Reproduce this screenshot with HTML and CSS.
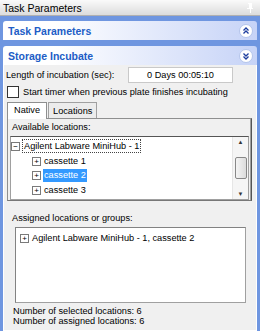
FILE: index.html
```html
<!DOCTYPE html>
<html lang="en">
<head>
  <meta charset="UTF-8">
  <title>Task Parameters</title>
  <link rel="stylesheet" href="styles.css">
</head>
<body>

  <div class="titlebar">
    <span>Task Parameters</span>
    <svg class="pin" width="8" height="10" viewBox="0 0 8 10">
      <rect x="2" y="0" width="4" height="1" fill="#fff"/>
      <rect x="3" y="1" width="3" height="4" fill="#fff"/>
      <rect x="1" y="5" width="6" height="1" fill="#fff"/>
      <rect x="4" y="6" width="1" height="4" fill="#fff"/>
    </svg>
  </div>

  <div class="pane">
    <div class="group-head first">
      <span>Task Parameters</span>
      <svg class="chev" width="14" height="14" viewBox="0 0 14 14">
        <circle cx="7" cy="7" r="6.5" fill="#fff" stroke="#b3c4ea"/>
        <path d="M4.5 6.5 L7 4 L9.5 6.5 M4.5 9.5 L7 7 L9.5 9.5" fill="none" stroke="#1c3d9e" stroke-width="1.3"/>
      </svg>
    </div>

    <div class="group-head">
      <span>Storage Incubate</span>
      <svg class="chev" width="14" height="14" viewBox="0 0 14 14">
        <circle cx="7" cy="7" r="6.5" fill="#fff" stroke="#b3c4ea"/>
        <path d="M4.5 4.5 L7 7 L9.5 4.5 M4.5 7.5 L7 10 L9.5 7.5" fill="none" stroke="#1c3d9e" stroke-width="1.3"/>
      </svg>
    </div>

    <div class="group-body">
      <div class="row">
        <label>Length of incubation (sec):</label>
        <div class="textbox">0 Days 00:05:10</div>
      </div>
      <div class="row check-row">
        <span class="checkbox"></span>
        <label>Start timer when previous plate finishes incubating</label>
      </div>

      <div class="tabs">
        <span class="tab active">Native</span>
        <span class="tab">Locations</span>
      </div>
      <div class="tab-page">
        <div class="caption">Available locations:</div>
        <div class="tree">
          <div class="tree-items">
            <div class="node root"><span class="box">−</span><span class="focus">Agilent Labware MiniHub - 1</span></div>
            <div class="node child"><span class="box">+</span><span class="txt">cassette 1</span></div>
            <div class="node child"><span class="box">+</span><span class="txt sel">cassette 2</span></div>
            <div class="node child"><span class="box">+</span><span class="txt">cassette 3</span></div>
            <div class="node child"><span class="box">+</span><span class="txt">cassette 4</span></div>
          </div>
          <div class="scrollbar">
            <span class="arrow">▲</span>
            <span class="thumb"></span>
            <span class="arrow down">▼</span>
          </div>
        </div>
      </div>

      <div class="caption assigned">Assigned locations or groups:</div>
      <div class="list">
        <div class="node"><span class="box">+</span><span class="txt">Agilent Labware MiniHub - 1, cassette 2</span></div>
      </div>

      <div class="counts">
        <div>Number of selected locations: 6</div>
        <div>Number of assigned locations: 6</div>
      </div>
    </div>
  </div>

</body>
</html>
```

FILE: styles.css
```css
html, body {
  margin: 0;
  padding: 0;
  height: 100%;
  overflow: hidden;
  font-family: "Liberation Sans", Arial, sans-serif;
  font-size: 9.2px;
  color: #000;
  background: #6f96e0;
}

.titlebar {
  height: 15px;
  display: flex;
  align-items: center;
  justify-content: space-between;
  padding: 0 6px 0 3px;
  background: linear-gradient(#fafafa, #dcdcdc);
  border-bottom: 1px solid #b0b0b0;
  font-size: 10.5px;
}

.pin {
  margin-top: 1px;
}

.pane {
  padding: 5px 3px 5px 3px;
  height: 310px;
  display: flex;
  flex-direction: column;
}

.group-head {
  height: 19px;
  display: flex;
  align-items: center;
  justify-content: space-between;
  padding: 0 4px 0 5px;
  border-radius: 3px 3px 0 0;
  background: linear-gradient(to right, #fff 0%, #fff 20%, #c6d3f7 100%);
  color: #215dc6;
  font-weight: bold;
  font-size: 10.5px;
  margin-top: 6px;
}

.group-head.first {
  margin-top: 0;
}

.group-body {
  flex: 1;
  background: #f0f0f0;
  border: 1px solid #fff;
  border-top: none;
  padding: 2px 4px 0 2px;
  display: flex;
  flex-direction: column;
}

.row {
  display: flex;
  align-items: center;
}

.row label {
  width: 120px;
}

.textbox {
  width: 103px;
  height: 14px;
  line-height: 14px;
  background: #fff;
  border: 1px solid #c9c9c9;
  text-align: center;
  margin-left: 2px;
}

.check-row {
  margin-top: 3px;
}

.check-row label {
  width: auto;
  margin-left: 4px;
}

.checkbox {
  width: 10px;
  height: 10px;
  border: 1px solid #333;
  background: #fff;
  margin-left: 1px;
}

.tabs {
  display: flex;
  margin-top: 4px;
  padding-left: 1px;
  height: 16px;
  align-items: flex-end;
}

.tab {
  padding: 1px 4px 0 4px;
  height: 14px;
  line-height: 14px;
  border: 1px solid #a0a0a0;
  border-bottom: none;
  background: #ececec;
  margin-right: 1px;
}

.tab.active {
  height: 16px;
  background: #fff;
  padding: 0 6px;
  position: relative;
  z-index: 1;
  margin-bottom: -1px;
  border-color: #8e8f8f;
}

.tab-page {
  border: 1px solid #8e8f8f;
  margin-left: 1px;
  padding: 3px 2px 2px 2px;
  height: 76px;
  background: #f0f0f0;
  border-right-color: #555;
  border-bottom-color: #777;
  box-shadow: inset -1px 0 #a0a0a0;
}

.caption {
  padding-left: 2px;
  height: 11px;
  line-height: 11px;
}

.tree {
  display: flex;
  margin-top: 3px;
  height: 62px;
  background: #fff;
  border: 1px solid #a0a0a0;
  border-top-color: #555;
  overflow: hidden;
}

.tree-items {
  flex: 1;
  padding-top: 2px;
}

.node {
  display: flex;
  align-items: center;
  height: 14.7px;
}

.node.child {
  padding-left: 21px;
}

.box {
  width: 7px;
  height: 7px;
  border: 1px solid #7a7a7a;
  font-size: 8px;
  line-height: 7px;
  text-align: center;
  color: #000;
  margin-right: 2px;
  background: #fff;
}

.focus {
  border: 1px dotted #444;
  padding: 0 1px;
  line-height: 12px;
}

.txt {
  padding: 0 1px;
  line-height: 13px;
}

.txt.sel {
  background: #3399ff;
  color: #fff;
}

.scrollbar {
  width: 15px;
  background: #f5f5f5;
  border-left: 1px solid #e6e6e6;
  display: flex;
  flex-direction: column;
  align-items: center;
  justify-content: space-between;
  padding: 2px 0;
}

.arrow {
  font-size: 6px;
  color: #333;
}

.thumb {
  width: 10px;
  height: 20px;
  border: 1px solid #888;
  border-radius: 2px;
  background: linear-gradient(to right, #f4f4f4, #dcdcdc);
}

.assigned {
  margin-top: 12px;
  padding-left: 6px;
}

.list {
  margin: 3px 6px 0 9px;
  height: 71px;
  background: #fff;
  border: 1px solid #a0a0a0;
  border-top-color: #828282;
  border-left-color: #828282;
  padding: 3px 0 0 4px;
}

.counts {
  margin-top: 3px;
  padding-left: 7px;
  line-height: 10px;
}
```
